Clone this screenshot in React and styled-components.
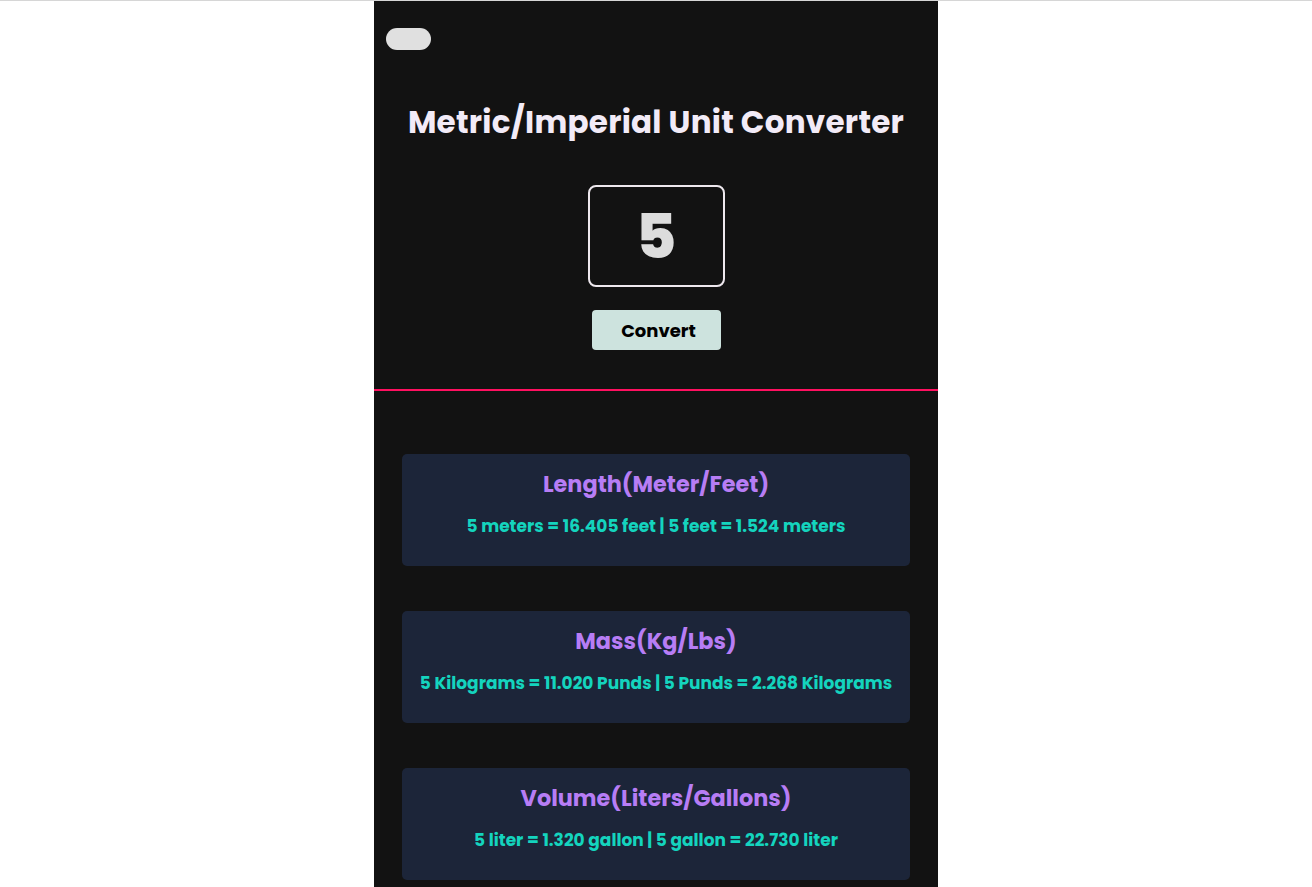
import React, { useState } from 'react';
import styled, { createGlobalStyle } from 'styled-components';

const GlobalStyle = createGlobalStyle`
  html, body {
    margin: 0;
    padding: 0;
    background: #ffffff;
  }
  body {
    border-top: 1px solid #d6d6d6;
    font-family: "Poppins", "Inter", "Noto Sans", sans-serif;
  }
`;

const App = () => {
  const [value, setValue] = useState('5');
  const [num, setNum] = useState(5);

  const handleConvert = () => {
    const n = parseFloat(value);
    setNum(isNaN(n) ? 0 : n);
  };

  const results = [
    {
      title: 'Length(Meter/Feet)',
      text: `${num} meters = ${(num * 3.281).toFixed(3)} feet | ${num} feet = ${(num / 3.281).toFixed(3)} meters`,
    },
    {
      title: 'Mass(Kg/Lbs)',
      text: `${num} Kilograms = ${(num * 2.204).toFixed(3)} Punds | ${num} Punds = ${(num / 2.2046).toFixed(3)} Kilograms`,
    },
    {
      title: 'Volume(Liters/Gallons)',
      text: `${num} liter = ${(num * 0.264).toFixed(3)} gallon | ${num} gallon = ${(num * 4.546).toFixed(3)} liter`,
    },
  ];

  return (
    <>
      <GlobalStyle />
      <Page>
        <Top>
          <Toggle aria-label="toggle theme" />
          <Title>Metric/Imperial Unit Converter</Title>
          <NumberInput value={value} onChange={(e) => setValue(e.target.value)} />
          <ConvertButton onClick={handleConvert}>Convert</ConvertButton>
        </Top>
        <Results>
          {results.map((r) => (
            <Card key={r.title}>
              <CardTitle>{r.title}</CardTitle>
              <CardText>{r.text}</CardText>
            </Card>
          ))}
        </Results>
      </Page>
    </>
  );
};

export default App;

const Page = styled.div`
  width: 564px;
  margin: 0 auto;
  min-height: 886px;
  background-color: #121212;
`;

const Top = styled.div`
  display: flex;
  flex-direction: column;
  align-items: center;
  padding: 27px 0 39px;
  border-bottom: 2px solid #ff1060;
`;

const Toggle = styled.button`
  align-self: flex-start;
  margin-left: 12px;
  width: 45px;
  height: 22px;
  border: none;
  border-radius: 11px;
  background-color: #e0e0e0;
  cursor: pointer;
`;

const Title = styled.h1`
  margin: 50px 0 0;
  font-size: 31px;
  font-weight: 700;
  line-height: 44px;
  color: #f2ebf7;
  letter-spacing: 0.25px;
`;

const NumberInput = styled.input`
  margin-top: 41px;
  box-sizing: border-box;
  width: 137px;
  height: 102px;
  background: transparent;
  border: 2px solid #eee8ee;
  border-radius: 8px;
  text-align: center;
  font-family: inherit;
  font-size: 62px;
  font-weight: 800;
  color: #dcdcdc;
  outline: none;
`;

const ConvertButton = styled.button`
  margin-top: 23px;
  width: 129px;
  height: 40px;
  padding: 0 0 0 5px;
  border: none;
  border-radius: 4px;
  background-color: #cde3de;
  color: #000;
  font-family: inherit;
  font-size: 18px;
  font-weight: 700;
  cursor: pointer;
`;

const Results = styled.div`
  display: flex;
  flex-direction: column;
  gap: 45px;
  padding: 63px 28px 6px;
`;

const Card = styled.div`
  display: flex;
  flex-direction: column;
  align-items: center;
  height: 112px;
  box-sizing: border-box;
  padding-top: 14px;
  background-color: #1c2539;
  border-radius: 5px;
`;

const CardTitle = styled.h2`
  margin: 0;
  font-size: 22.4px;
  font-weight: 700;
  line-height: 33px;
  color: #b77df5;
`;

const CardText = styled.p`
  margin: 13px 0 0;
  font-size: 17px;
  font-weight: 700;
  line-height: 24px;
  color: #14d4be;
`;
